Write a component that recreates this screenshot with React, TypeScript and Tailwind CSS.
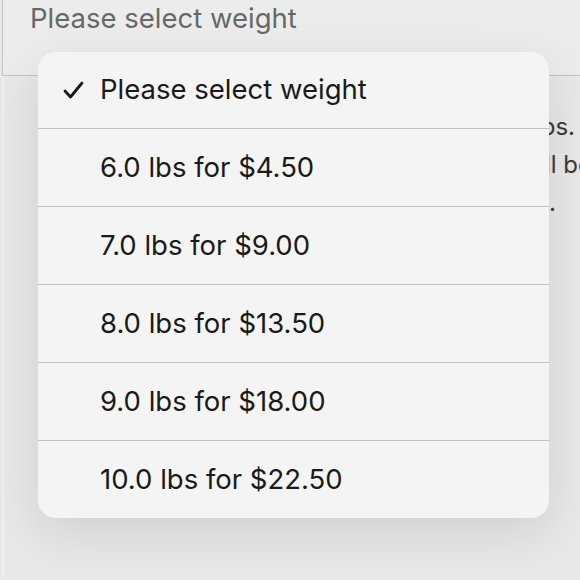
import React from 'react';

const options = [
  '6.0 lbs for $4.50',
  '7.0 lbs for $9.00',
  '8.0 lbs for $13.50',
  '9.0 lbs for $18.00',
  '10.0 lbs for $22.50',
];

function Check() {
  return (
    <svg width="21" height="18" viewBox="0 0 21 18" fill="none">
      <path d="M2 10 L7.5 16 L19 2" stroke="#1a1a1a" strokeWidth="2.8" strokeLinecap="round" strokeLinejoin="round" />
    </svg>
  );
}

export default function App() {
  return (
    <div className="relative w-[580px] h-[580px] overflow-hidden bg-[#e8e8e8] font-['Inter',sans-serif]">
      {/* select field */}
      <div className="ml-[2px] -mt-[2px] h-[78px] border border-r-0 border-[#c4c4c4] bg-[#ececec] pl-[27px]">
        <span className="text-[27.5px] leading-[38px] text-[#686868]">Please select weight</span>
      </div>

      {/* text behind the menu */}
      <div className="ml-[2px] border-l-2 border-[#f1f1f1] h-[502px] pt-[32px] text-[24px] leading-[38px] text-[#3a3a3a]">
        <div className="whitespace-nowrap text-right pr-[5px]">Shipping costs are listed for each option in lbs.</div>
        <div className="whitespace-nowrap text-right -mr-[12px]">Heavier parcels will be</div>
        <div className="whitespace-nowrap text-right pr-[24px]">charged at checkout.</div>
      </div>

      {/* dropdown menu */}
      <div className="absolute left-[38px] top-[52px] w-[511px] rounded-[18px] bg-[#f4f4f4] shadow-[0_14px_50px_rgba(0,0,0,0.11)] overflow-hidden">
        <div className="h-[76px] flex items-center">
          <div className="w-[62px] flex justify-end pr-[16px]">
            <Check />
          </div>
          <span className="text-[27.5px] text-[#1a1a1a]">Please select weight</span>
        </div>
        {options.map((o) => (
          <div key={o} className="h-[78px] border-t border-[#c2c2c2] flex items-center pl-[62px]">
            <span className="text-[27.5px] text-[#1a1a1a]">{o}</span>
          </div>
        ))}
      </div>
    </div>
  );
}
